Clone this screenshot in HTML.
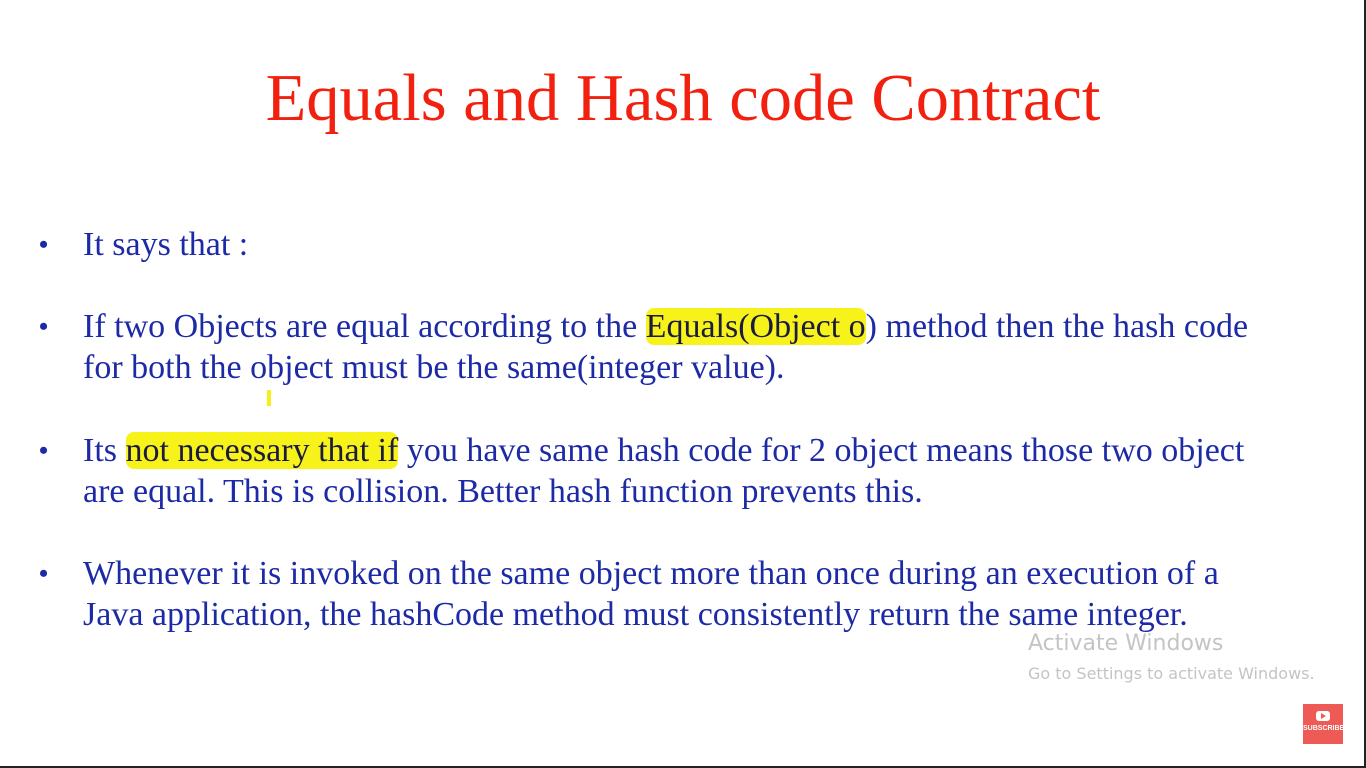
<!DOCTYPE html>
<html><head><meta charset="utf-8"><style>
html,body{margin:0;padding:0}
body{width:1366px;height:768px;background:#fff;position:relative;overflow:hidden;font-family:"Liberation Serif",serif}
.frame{position:absolute;left:0;top:0;width:1364px;height:766px;border-right:2px solid #222;border-bottom:2px solid #222}
h1{position:absolute;left:0;width:1366px;top:61px;margin:0;text-align:center;font-weight:normal;font-size:66.5px;color:#f2200e;white-space:nowrap}
.t{position:absolute;left:83px;font-size:34px;color:#1c2aa6;white-space:nowrap}
.b{position:absolute;left:39px;font-size:26px;color:#1c2aa6;font-weight:bold}
.hl{background:#f7f21a;color:#1b1b40;border-radius:8px}
.wm{position:absolute;left:1028px;font-family:"DejaVu Sans",sans-serif;color:#c4c4c4}
</style></head><body>
<div class="frame"></div>
<h1>Equals and Hash code Contract</h1>
<div class="b" style="top:230px">•</div>
<div class="t" style="top:226px">It says that :</div>
<div class="b" style="top:312px">•</div>
<div class="t" style="top:308px">If two Objects are equal according to the <span class="hl">Equals(Object o</span>) method then the hash code</div>
<div class="t" style="top:349px">for both the object must be the same(integer value).</div>
<div style="position:absolute;left:267px;top:390px;width:4px;height:16px;background:#f5ee1a"></div>
<div class="b" style="top:436px">•</div>
<div class="t" style="top:432px">Its <span class="hl">not necessary that if</span> you have same hash code for 2 object means those two object</div>
<div class="t" style="top:473px">are equal. This is collision. Better hash function prevents this.</div>
<div class="b" style="top:559px">•</div>
<div class="t" style="top:555px">Whenever it is invoked on the same object more than once during an execution of a</div>
<div class="t" style="top:596px">Java application, the hashCode method must consistently return the same integer.</div>
<div class="wm" style="top:631px;font-size:22px">Activate Windows</div>
<div class="wm" style="top:664px;font-size:16px">Go to Settings to activate Windows.</div>
<div style="position:absolute;left:1303px;top:704px;width:40px;height:40px;background:#ee5a55">
<div style="position:absolute;left:13px;top:7px;width:14px;height:10px;background:#fff;border-radius:3px"></div>
<div style="position:absolute;left:18px;top:9px;width:0;height:0;border-left:5px solid #ee5a55;border-top:3px solid transparent;border-bottom:3px solid transparent"></div>
<div style="position:absolute;left:0;width:40px;top:21px;text-align:center;font-family:'Liberation Sans',sans-serif;font-weight:bold;font-size:7px;color:#fff">SUBSCRIBE</div>
</div>
</body></html>
